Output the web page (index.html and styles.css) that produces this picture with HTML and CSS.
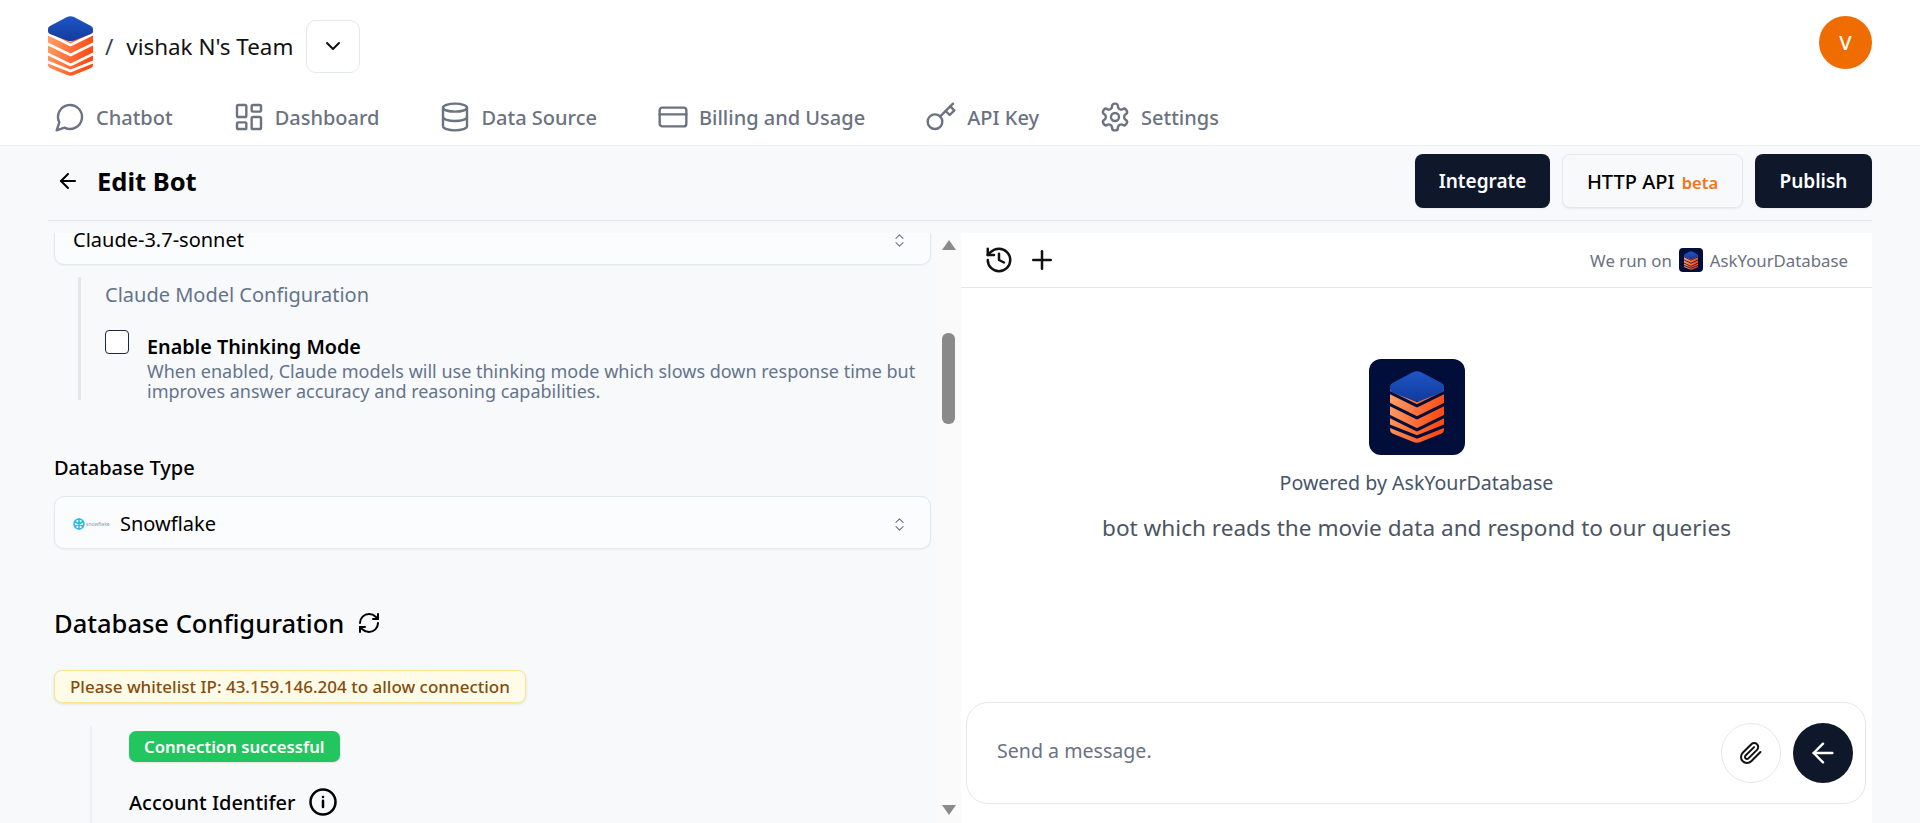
FILE: index.html
```html
<!DOCTYPE html>
<html>
<head>
    <title>Edit Bot</title>
    <link rel="stylesheet" href="styles.css">
</head>
<body>
    <!-- Top header with team row and nav -->
    <header class="topbar">
        <div class="team-row">
            <div class="team">
                <svg class="logo" viewBox="0 0 45 60">
                    <defs>
                        <linearGradient id="layerFill" x1="0" y1="0" x2="1" y2="0.3">
                            <stop offset="0" stop-color="#ffa36b"/>
                            <stop offset="1" stop-color="#ff4b16"/>
                        </linearGradient>
                        <linearGradient id="capFill" x1="0" y1="0" x2="0" y2="1">
                            <stop offset="0" stop-color="#1f55c4"/>
                            <stop offset="1" stop-color="#123b9e"/>
                        </linearGradient>
                        <symbol id="stack" viewBox="0 0 45 60">
                            <path fill="url(#layerFill)" d="M0 14L22.500 26L45 14V49Q45 51 43 52L26 59Q22.500 60.500 19 59L2 52Q0 51 0 49Z"/>
                            <g fill="none" stroke="currentColor" stroke-width="2.600">
                                <path d="M0 18L22.500 29L45 18"/>
                                <path d="M0 28L22.500 39L45 28"/>
                                <path d="M0 38L22.500 49L45 38"/>
                                <path d="M0 46L22.500 55L45 46"/>
                            </g>
                            <path fill="url(#capFill)" d="M19 1Q22.500 -.5 26 1L43 10Q45 11 45 13V15Q45 17 43 18L26 24.500Q22.500 26 19 24.500L2 18Q0 17 0 15V13Q0 11 2 10Z"/>
                        </symbol>
                    </defs>
                    <use href="#stack"/>
                </svg>
                <span class="team-slash">/</span>
                <span class="team-name">vishak N's Team</span>
                <button class="team-toggle">
                    <svg class="icon-sm" viewBox="0 0 24 24"><path d="m6 9 6 6 6-6"/></svg>
                </button>
            </div>
            <div class="avatar">V</div>
        </div>
        <nav class="nav">
            <a class="nav-item">
                <svg class="icon" viewBox="0 0 24 24"><path d="M7.900 20A9 9 0 1 0 4 16.100L2 22Z"/></svg>
                Chatbot
            </a>
            <a class="nav-item">
                <svg class="icon" viewBox="0 0 24 24"><rect x="3" y="3" width="7" height="9" rx="1"/><rect x="14" y="3" width="7" height="5" rx="1"/><rect x="14" y="12" width="7" height="9" rx="1"/><rect x="3" y="16" width="7" height="5" rx="1"/></svg>
                Dashboard
            </a>
            <a class="nav-item">
                <svg class="icon" viewBox="0 0 24 24"><ellipse cx="12" cy="5" rx="9" ry="3"/><path d="M3 5v14a9 3 0 0 0 18 0V5"/><path d="M3 12a9 3 0 0 0 18 0"/></svg>
                Data Source
            </a>
            <a class="nav-item">
                <svg class="icon" viewBox="0 0 24 24"><rect x="2" y="5" width="20" height="14" rx="2"/><path d="M2 10h20"/></svg>
                Billing and Usage
            </a>
            <a class="nav-item">
                <svg class="icon" viewBox="0 0 24 24"><circle cx="7.500" cy="15.500" r="5.500"/><path d="m21 2-9.600 9.600"/><path d="m15.500 7.500 3 3L22 7l-3-3"/></svg>
                API Key
            </a>
            <a class="nav-item">
                <svg class="icon" viewBox="0 0 24 24"><path d="M12.220 2h-.44a2 2 0 0 0-2 2v.18a2 2 0 0 1-1 1.730l-.43.25a2 2 0 0 1-2 0l-.15-.08a2 2 0 0 0-2.730.73l-.22.38a2 2 0 0 0 .73 2.730l.15.1a2 2 0 0 1 1 1.720v.51a2 2 0 0 1-1 1.740l-.15.09a2 2 0 0 0-.73 2.730l.22.38a2 2 0 0 0 2.730.73l.15-.08a2 2 0 0 1 2 0l.43.25a2 2 0 0 1 1 1.730V20a2 2 0 0 0 2 2h.44a2 2 0 0 0 2-2v-.18a2 2 0 0 1 1-1.730l.43-.25a2 2 0 0 1 2 0l.15.08a2 2 0 0 0 2.730-.73l.22-.39a2 2 0 0 0-.73-2.730l-.15-.08a2 2 0 0 1-1-1.740v-.5a2 2 0 0 1 1-1.740l.15-.09a2 2 0 0 0 .73-2.730l-.22-.38a2 2 0 0 0-2.730-.73l-.15.08a2 2 0 0 1-2 0l-.43-.25a2 2 0 0 1-1-1.730V4a2 2 0 0 0-2-2z"/><circle cx="12" cy="12" r="3"/></svg>
                Settings
            </a>
        </nav>
    </header>

    <main class="page">
        <!-- Title and actions -->
        <div class="page-head">
            <div class="page-title">
                <svg class="icon-back" viewBox="0 0 24 24"><path d="m12 19-7-7 7-7"/><path d="M19 12H5"/></svg>
                <h1>Edit Bot</h1>
            </div>
            <div class="actions">
                <button class="btn btn-dark btn-integrate">Integrate</button>
                <button class="btn btn-light">HTTP API <span class="beta">beta</span></button>
                <button class="btn btn-dark btn-publish">Publish</button>
            </div>
        </div>

        <div class="workspace">
            <!-- Left: settings form, scrolled part way down -->
            <section class="form-pane">
                <div class="select select-clipped">
                    <span>Claude-3.7-sonnet</span>
                    <svg class="icon-updown" viewBox="0 0 24 24"><path d="m7 15 5 5 5-5"/><path d="m7 9 5-5 5 5"/></svg>
                </div>
                <div class="model-config">
                    <div class="model-config-title">Claude Model Configuration</div>
                    <div class="check-row">
                        <span class="checkbox"></span>
                        <div>
                            <div class="check-label">Enable Thinking Mode</div>
                            <p class="check-help">When enabled, Claude models will use thinking mode which slows down response time but improves answer accuracy and reasoning capabilities.</p>
                        </div>
                    </div>
                </div>
                <label class="field-label">Database Type</label>
                <div class="select">
                    <span class="select-value">
                        <span class="snow-logo">
                            <svg class="snow-mark" viewBox="0 0 24 24"><circle cx="12" cy="12" r="10"/><path d="M12 2v20M3.300 7l17.400 10M20.700 7L3.300 17"/></svg>
                            <span class="snow-name">snowflake</span>
                        </span>
                        Snowflake
                    </span>
                    <svg class="icon-updown" viewBox="0 0 24 24"><path d="m7 15 5 5 5-5"/><path d="m7 9 5-5 5 5"/></svg>
                </div>
                <h2 class="section-title">
                    Database Configuration
                    <svg class="icon-refresh" viewBox="0 0 24 24"><path d="M3 12a9 9 0 0 1 9-9 9.750 9.750 0 0 1 6.740 2.740L21 8"/><path d="M21 3v5h-5"/><path d="M21 12a9 9 0 0 1-9 9 9.750 9.750 0 0 1-6.740-2.740L3 16"/><path d="M8 16H3v5"/></svg>
                </h2>
                <div class="ip-note">Please whitelist IP: 43.159.146.204 to allow connection</div>
                <div class="connection">
                    <span class="status-ok">Connection successful</span>
                    <div class="account-label">
                        Account Identifer
                        <svg class="icon-info" viewBox="0 0 24 24"><circle cx="12" cy="12" r="10"/><path d="M12 16v-5"/><path d="M12 8h.01"/></svg>
                    </div>
                </div>
            </section>

            <!-- Scrollbar of the form -->
            <div class="scrollbar">
                <span class="scroll-up"></span>
                <span class="scroll-thumb"></span>
                <span class="scroll-down"></span>
            </div>

            <!-- Right: chat preview -->
            <section class="chat">
                <div class="chat-head">
                    <div class="chat-tools">
                        <svg class="icon-tool" viewBox="0 0 24 24"><path d="M3 12a9 9 0 1 0 9-9 9.750 9.750 0 0 0-6.740 2.740L3 8"/><path d="M3 3v5h5"/><path d="M12 7v5l4 2"/></svg>
                        <svg class="icon-tool" viewBox="0 0 24 24"><path d="M5 12h14"/><path d="M12 5v14"/></svg>
                    </div>
                    <div class="run-on">
                        We run on
                        <span class="brand-tile brand-tile-sm"><svg class="stack-sm" viewBox="0 0 45 60"><use href="#stack"/></svg></span>
                        AskYourDatabase
                    </div>
                </div>
                <div class="chat-body">
                    <span class="brand-tile brand-tile-lg"><svg class="stack-lg" viewBox="0 0 45 60"><use href="#stack"/></svg></span>
                    <div class="powered">Powered by AskYourDatabase</div>
                    <div class="bot-desc">bot which reads the movie data and respond to our queries</div>
                </div>
                <div class="composer">
                    <span class="composer-text">Send a message.</span>
                    <button class="round-btn round-attach">
                        <svg class="icon-clip" viewBox="0 0 24 24"><path d="m21.440 11.050-9.190 9.190a6 6 0 0 1-8.490-8.490l8.570-8.570A4 4 0 1 1 18 8.840l-8.590 8.570a2 2 0 0 1-2.830-2.830l8.490-8.480"/></svg>
                    </button>
                    <button class="round-btn round-send">
                        <svg class="icon-send" viewBox="0 0 24 24"><path d="m12 19-7-7 7-7"/><path d="M19 12H5"/></svg>
                    </button>
                </div>
            </section>
        </div>
    </main>
</body>
</html>
```

FILE: styles.css
```css
/* Page base */
html, body {
    height: 100%;
}

body {
    margin: 0;
    overflow: hidden;
    font-family: "Noto Sans", "Open Sans", sans-serif;
    color: #000;
    background-color: #f8f9fb;
}

svg {
    fill: none;
    stroke: currentColor;
    stroke-width: 2;
    stroke-linecap: round;
    stroke-linejoin: round;
    flex-shrink: 0;
}

button {
    font-family: inherit;
}

/* Header */
.topbar {
    height: 146px;
    box-sizing: border-box;
    background: #fff;
    border-bottom: 1px solid #eceef1;
}

.team-row {
    display: flex;
    justify-content: space-between;
    align-items: flex-start;
    height: 101px;
    padding: 16px 48px;
    box-sizing: border-box;
}

.team {
    display: flex;
    align-items: center;
    height: 60px;
}

.logo {
    width: 45px;
    height: 60px;
    stroke: none;
    color: #fff;
}

.team-slash {
    margin-left: 12px;
    font-size: 22.400px;
    color: #374151;
}

.team-name {
    margin-left: 13px;
    font-size: 22.400px;
    color: #111;
}

.team-toggle {
    display: flex;
    align-items: center;
    justify-content: center;
    width: 54px;
    height: 53px;
    margin-left: 13px;
    padding: 0;
    background: #fff;
    border: 1px solid #e2e8f0;
    border-radius: 10px;
    color: #111;
}

.icon-sm {
    width: 24px;
    height: 24px;
}

.avatar {
    display: flex;
    align-items: center;
    justify-content: center;
    width: 53px;
    height: 53px;
    border-radius: 50%;
    background: #ef6c00;
    color: #fff;
    font-size: 20px;
    font-weight: 500;
}

.nav {
    display: flex;
    gap: 60px;
    padding-left: 54px;
}

.nav-item {
    display: flex;
    align-items: center;
    gap: 10px;
    font-size: 20px;
    font-weight: 500;
    color: #6b7280;
}

.icon {
    width: 32px;
    height: 32px;
    stroke-width: 1.800;
}

/* Title row */
.page-head {
    display: flex;
    justify-content: space-between;
    align-items: center;
    height: 75px;
    padding-bottom: 4px;
    box-sizing: border-box;
    margin: 0 48px;
    border-bottom: 1px solid #e5e7eb;
}

.page-title {
    display: flex;
    align-items: center;
    gap: 17px;
    padding-left: 8px;
}

.page-title h1 {
    margin: 0;
    font-size: 25.500px;
    font-weight: 700;
}

.icon-back {
    width: 24px;
    height: 24px;
}

.actions {
    display: flex;
    gap: 12px;
}

.btn {
    height: 54px;
    padding: 0;
    border-radius: 8px;
    font-size: 19px;
    font-weight: 600;
    box-shadow: 0 1px 2px rgba(0,0,0,0.06);
}

.btn-dark {
    background: #0f172a;
    color: #fff;
    border: none;
}

.btn-integrate {
    width: 135px;
}

.btn-publish {
    width: 117px;
}

.btn-light {
    width: 181px;
    background: #f8f9fb;
    color: #000;
    border: 1px solid #e2e8f0;
    font-size: 20px;
    font-weight: 500;
}

.beta {
    margin-left: 2px;
    font-size: 16.500px;
    font-weight: 600;
    color: #f97316;
}

/* Two panes */
.workspace {
    display: flex;
    height: 590px;
    margin: 12px 48px 0;
}

.form-pane {
    width: 889px;
    box-sizing: border-box;
    padding: 0 6px;
    overflow: hidden;
}

.select {
    display: flex;
    justify-content: space-between;
    align-items: center;
    height: 53px;
    padding: 3px 22px 0 18px;
    box-sizing: border-box;
    background: #fbfcfd;
    border: 1px solid #e2e8f0;
    border-radius: 10px;
    box-shadow: 0 1px 2px rgba(0,0,0,0.05);
    font-size: 20px;
    line-height: 16px;
}

.select-clipped {
    margin-top: -21px;
}

.select-value {
    display: flex;
    align-items: center;
}

.icon-updown {
    width: 17px;
    height: 17px;
    color: #64748b;
    stroke-width: 1.500;
}

.model-config {
    height: 123px;
    margin: 12px 0 0 24px;
    padding-left: 24px;
    border-left: 3px solid #e5e7eb;
}

.model-config-title {
    padding-top: 4px;
    font-size: 20px;
    color: #64748b;
}

.check-row {
    display: flex;
    gap: 18px;
    margin-top: 22px;
}

.checkbox {
    width: 24px;
    height: 24px;
    box-sizing: border-box;
    flex-shrink: 0;
    background: #fff;
    border: 1.500px solid #1f2937;
    border-radius: 4px;
}

.check-label {
    margin-top: 2px;
    font-size: 19.800px;
    font-weight: 600;
    line-height: 29px;
}

.check-help {
    margin: 0;
    font-size: 18px;
    line-height: 20px;
    color: #64748b;
}

.field-label {
    display: block;
    margin-top: 54px;
    margin-bottom: 15px;
    font-size: 20px;
    font-weight: 500;
}

.snow-logo {
    display: flex;
    align-items: center;
    gap: 1px;
    width: 47px;
}

.snow-mark {
    width: 12px;
    height: 12px;
    color: #29b5e8;
    stroke-width: 3;
}

.snow-name {
    font-size: 5px;
    color: #7c9cb0;
}

.section-title {
    display: flex;
    align-items: center;
    gap: 13px;
    margin: 57px 0 0;
    font-size: 25.500px;
    font-weight: 500;
}

.icon-refresh {
    width: 24px;
    height: 24px;
}

.ip-note {
    display: inline-block;
    margin-top: 30px;
    padding: 4px 15px;
    background: #fefce8;
    border: 1px solid #fde68a;
    border-radius: 8px;
    box-shadow: 0 1px 3px rgba(0,0,0,0.12);
    font-size: 17px;
    font-weight: 500;
    color: #854d0e;
}

.connection {
    margin: 23px 0 0 36px;
    padding: 5px 0 30px 37px;
    border-left: 2px solid #eef0f3;
}

.status-ok {
    display: inline-block;
    padding: 4px 15px;
    background: #22c55e;
    border-radius: 7px;
    box-shadow: 0 1px 2px rgba(0,0,0,0.1);
    font-size: 16.700px;
    font-weight: 600;
    color: #fff;
}

.account-label {
    display: flex;
    align-items: center;
    gap: 12px;
    margin-top: 25px;
    font-size: 20px;
    font-weight: 500;
}

.icon-info {
    width: 30px;
    height: 30px;
}

/* Fake classic scrollbar */
.scrollbar {
    display: flex;
    flex-direction: column;
    align-items: center;
    width: 24px;
    background: #fafafa;
}

.scroll-up {
    margin-top: 7px;
    border-left: 7px solid transparent;
    border-right: 7px solid transparent;
    border-bottom: 10px solid #8a8a8a;
}

.scroll-thumb {
    width: 13px;
    height: 91px;
    margin-top: 83px;
    margin-left: -1px;
    background: #8a8a8a;
    border-radius: 6px;
}

.scroll-down {
    margin-top: auto;
    margin-bottom: 8px;
    border-left: 7px solid transparent;
    border-right: 7px solid transparent;
    border-top: 10px solid #8a8a8a;
}

/* Chat preview */
.chat {
    display: flex;
    flex-direction: column;
    flex: 1;
    background: #fff;
}

.chat-head {
    display: flex;
    justify-content: space-between;
    align-items: center;
    height: 55px;
    box-sizing: border-box;
    padding: 0 24px 0 23px;
    border-bottom: 1px solid #e5e7eb;
}

.chat-tools {
    display: flex;
    align-items: center;
    gap: 13px;
}

.icon-tool {
    width: 30px;
    height: 30px;
    color: #111;
}

.run-on {
    display: flex;
    align-items: center;
    gap: 7px;
    font-size: 16.800px;
    color: #6b7280;
}

.brand-tile {
    display: flex;
    align-items: center;
    justify-content: center;
    background: #020e3a;
}

.brand-tile-sm {
    width: 24px;
    height: 24px;
    border-radius: 4px;
}

.brand-tile-lg {
    width: 96px;
    height: 96px;
    border-radius: 12px;
}

.stack-sm {
    width: 14px;
    height: 19px;
    stroke: none;
    color: #020e3a;
}

.stack-lg {
    width: 54px;
    height: 72px;
    stroke: none;
    color: #020e3a;
}

.chat-body {
    display: flex;
    flex-direction: column;
    align-items: center;
    flex: 1;
    padding-top: 71px;
}

.powered {
    margin-top: 14px;
    font-size: 19.600px;
    color: #475569;
}

.bot-desc {
    margin-top: 16px;
    font-size: 22.600px;
    color: #4b5563;
}

.composer {
    display: flex;
    align-items: center;
    gap: 12px;
    height: 102px;
    box-sizing: border-box;
    margin: 0 6px 19px 5px;
    padding: 0 12px 0 30px;
    background: #fff;
    border: 1px solid #e5e7eb;
    border-radius: 22px;
}

.composer-text {
    flex: 1;
    padding-bottom: 5px;
    font-size: 19.600px;
    color: #6b7280;
}

.round-btn {
    display: flex;
    align-items: center;
    justify-content: center;
    width: 60px;
    height: 60px;
    padding: 0;
    border-radius: 50%;
}

.round-attach {
    background: #fff;
    border: 1px solid #e2e8f0;
    color: #111;
}

.round-send {
    background: #0f172a;
    border: none;
    color: #fff;
}

.icon-clip {
    width: 24px;
    height: 24px;
}

.icon-send {
    width: 32px;
    height: 32px;
    stroke-width: 1.800;
}
```
